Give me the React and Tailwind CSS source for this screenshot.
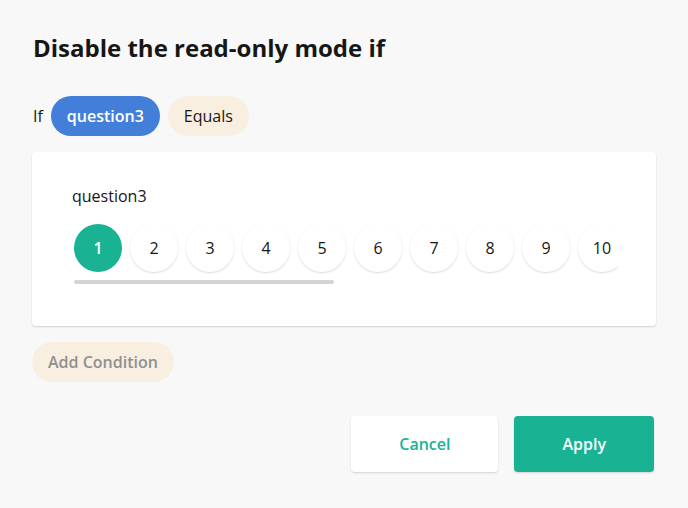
import React from "react";

const values = [1, 2, 3, 4, 5, 6, 7, 8, 9, 10];

const RatingItem = ({ value, selected }) => {
  return (
    <div
      className={
        selected
          ? "flex h-12 w-12 shrink-0 items-center justify-center rounded-full bg-[#19b394] text-base font-semibold text-white"
          : "flex h-12 w-12 shrink-0 items-center justify-center rounded-full bg-white text-base text-[#161616] shadow-[0_1px_2px_rgba(0,0,0,0.15)]"
      }
    >
      {value}
    </div>
  );
};

const App = () => {
  return (
    <div
      className="h-[508px] w-[688px] overflow-hidden bg-[#f8f8f8] pl-8 pr-[34px] pt-8"
      style={{ fontFamily: '"Open Sans", sans-serif' }}
    >
      <h1 className="pl-px text-2xl leading-8 font-bold text-[#161616]">
        Disable the read-only mode if
      </h1>

      <div className="mt-8 flex items-center gap-2 pl-px">
        <span className="text-base leading-6 text-[#161616]">If</span>
        <span className="rounded-full bg-[#437fd9] px-4 py-2 text-base leading-6 font-semibold text-white">
          question3
        </span>
        <span className="rounded-full bg-[#f9efe1] px-4 py-2 text-base leading-6 text-[#161616]">
          Equals
        </span>
      </div>

      <div className="mt-4 mr-[-2px] rounded bg-white pt-8 pb-[42px] pl-10 shadow-[0_1px_2px_rgba(0,0,0,0.15)]">
        <div className="text-base leading-6 text-[#161616]">question3</div>
        <div className="mt-4 w-[546px] overflow-hidden">
          <div className="flex gap-2 pl-[2px]">
            {values.map(v => (
              <RatingItem key={v} value={v} selected={v === 1} />
            ))}
          </div>
          <div className="mt-2 ml-[2px] h-1 w-[260px] rounded-full bg-[#d4d4d4]" />
        </div>
      </div>

      <div className="mt-4 flex">
        <span className="rounded-full bg-[#f9efe1] px-4 py-2 text-base leading-6 font-semibold text-[#909090]">
          Add Condition
        </span>
      </div>

      <div className="mt-[34px] flex justify-end gap-4">
        <button className="rounded bg-white px-12 py-4 text-base leading-6 font-semibold text-[#19b394] shadow-[0_1px_2px_rgba(0,0,0,0.15)]">
          Cancel
        </button>
        <button className="rounded bg-[#19b394] px-12 py-4 text-base leading-6 font-semibold text-white shadow-[0_1px_2px_rgba(0,0,0,0.15)]">
          Apply
        </button>
      </div>
    </div>
  );
};

export default App;
